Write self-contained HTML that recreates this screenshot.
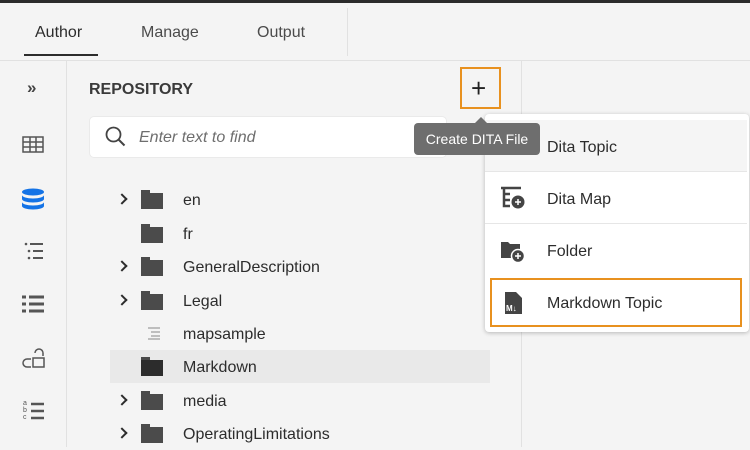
<!DOCTYPE html>
<html><head><style>
*{margin:0;padding:0;box-sizing:border-box}
body{width:750px;height:447px;overflow:hidden;background:#f4f4f4;font-family:"Liberation Sans",sans-serif;color:#2c2c2c;position:relative}
.a{position:absolute}
.tab{position:absolute;top:24px;font-size:16px;color:#4b4b4b}
.row{position:absolute;left:110px;width:380px;height:33px}
.row .t{position:absolute;left:73px;top:9px;font-size:16px;color:#2c2c2c}
.row .f{position:absolute;left:31px;top:10px;width:22px;height:16px;background:#4b4b4b}
.row .f:before{content:"";position:absolute;left:0;top:-3px;width:9px;height:3px;background:#4b4b4b}
.row .c{position:absolute;left:8px;top:12px;width:8px;height:8px;border-right:2px solid #2c2c2c;border-bottom:2px solid #2c2c2c;transform:rotate(-45deg)}
.mi{position:absolute;left:0;width:262px;height:52px;border-bottom:1px solid #e6e6e6}
.mi .t{position:absolute;left:62px;top:19px;font-size:16px;color:#2c2c2c}
</style></head><body>
<div class="a" style="left:0;top:0;width:750px;height:3px;background:#2b2b2b"></div>
<div class="a" style="left:0;top:60px;width:750px;height:1px;background:#e1e1e1"></div>
<div class="tab" style="left:35px;color:#2c2c2c">Author</div>
<div class="tab" style="left:141px">Manage</div>
<div class="tab" style="left:257px">Output</div>
<div class="a" style="left:24px;top:54px;width:74px;height:2px;background:#2c2c2c"></div>
<div class="a" style="left:347px;top:8px;width:1px;height:48px;background:#e1e1e1"></div>
<div class="a" style="left:66px;top:61px;width:1px;height:386px;background:#e1e1e1"></div>
<div class="a" style="left:521px;top:61px;width:1px;height:386px;background:#e1e1e1"></div>
<div class="a" style="left:27px;top:78px;font-size:17px;font-weight:bold;color:#444">»</div>
<svg class="a" style="left:22px;top:136px" width="22" height="17"><rect x="1" y="1" width="20" height="15" fill="none" stroke="#555" stroke-width="1.5"/><path d="M8 1v15M14 1v15M1 6h20M1 11h20" stroke="#555" stroke-width="1.5"/></svg>
<svg class="a" style="left:21px;top:188px" width="24" height="22"><ellipse cx="12" cy="4" rx="11" ry="3.5" fill="#1473e6"/><path d="M1 7c0 2 5 3.5 11 3.5S23 9 23 7v4c0 2-5 3.5-11 3.5S1 13 1 11z M1 14c0 2 5 3.5 11 3.5S23 16 23 14v4c0 2-5 3.5-11 3.5S1 20 1 18z" fill="#1473e6"/></svg>
<svg class="a" style="left:24px;top:242px" width="20" height="18"><path d="M6 2h13M9 9h10M9 16h10" stroke="#555" stroke-width="2"/><circle cx="2" cy="2" r="1.3" fill="#555"/><circle cx="5" cy="9" r="1.3" fill="#555"/><circle cx="5" cy="16" r="1.3" fill="#555"/></svg>
<svg class="a" style="left:22px;top:295px" width="22" height="18"><path d="M0 2h4M0 9h4M0 16h4M7 2h15M7 9h15M7 16h15" stroke="#555" stroke-width="3"/></svg>
<svg class="a" style="left:22px;top:347px" width="24" height="22"><path d="M13 6a4 4 0 0 1 8 0v3M9 12l-4 0a4 4 0 0 0 0 8h4" fill="none" stroke="#555" stroke-width="1.5"/><rect x="11" y="11" width="11" height="9" fill="none" stroke="#555" stroke-width="1.5"/></svg>
<div class="a" style="left:23px;top:400px;font-size:7px;line-height:7px;color:#555">a<br>b<br>c</div>
<svg class="a" style="left:29px;top:402px" width="16" height="20"><path d="M2 2h13M2 9h13M2 16h13" stroke="#555" stroke-width="2.5"/></svg>
<div class="a" style="left:89px;top:81px;font-size:16px;font-weight:bold;color:#3a3a3a">REPOSITORY</div>
<div class="a" style="left:460px;top:67px;width:41px;height:42px;border:2px solid #e8911f"></div>
<div class="a" style="left:471px;top:73px;font-size:26px;color:#222">+</div>
<div class="a" style="left:89px;top:116px;width:358px;height:42px;background:#fff;border-radius:5px;border:1px solid #eaeaea"></div>
<svg class="a" style="left:105px;top:126px" width="22" height="22"><circle cx="8.5" cy="8.5" r="7" fill="none" stroke="#444" stroke-width="1.8"/><path d="M13.5 13.5l6 6" stroke="#444" stroke-width="2"/></svg>
<div class="a" style="left:139px;top:129px;font-size:16px;font-style:italic;color:#6e6e6e">Enter text to find</div>
<div class="row" style="top:183px"><div class="c"></div><div class="f"></div><div class="t">en</div></div>
<div class="row" style="top:217px"><div class="f"></div><div class="t">fr</div></div>
<div class="row" style="top:250px"><div class="c"></div><div class="f"></div><div class="t">GeneralDescription</div></div>
<div class="row" style="top:284px"><div class="c"></div><div class="f"></div><div class="t">Legal</div></div>
<div class="row" style="top:317px"><svg class="a" style="left:33px;top:10px" width="18" height="13"><path d="M5 1h12M8 5h9M8 9h9M5 12h12" stroke="#888" stroke-width="1"/></svg><div class="t">mapsample</div></div>
<div class="row" style="top:350px;background:#e9e9e9"><div class="f" style="background:#2c2c2c"></div><div class="t">Markdown</div></div>
<div class="row" style="top:384px"><div class="c"></div><div class="f"></div><div class="t">media</div></div>
<div class="row" style="top:417px"><div class="c"></div><div class="f"></div><div class="t">OperatingLimitations</div></div>
<div class="a" style="left:485px;top:114px;width:264px;height:218px;background:#fff;border-radius:4px;box-shadow:0 1px 4px rgba(0,0,0,.25)">
<div class="mi" style="top:6px;background:#f5f5f5"><div class="t">Dita Topic</div></div>
<div class="mi" style="top:58px"><svg class="a" style="left:15px;top:14px" width="26" height="24"><path d="M1 2h20M4 2v18h6M4 8h6M4 14h6" stroke="#444" stroke-width="2.5" fill="none"/><circle cx="18" cy="16" r="6.5" fill="#444"/><path d="M18 13v6M15 16h6" stroke="#fff" stroke-width="1.5"/></svg><div class="t">Dita Map</div></div>
<div class="mi" style="top:110px;border:none"><svg class="a" style="left:15px;top:15px" width="26" height="24"><path d="M1 3h7l2 2h10v8H1z" fill="#444"/><path d="M1 6h12v13H1z" fill="#444"/><circle cx="18" cy="17" r="6.5" fill="#444" stroke="#fff" stroke-width="1.5"/><path d="M18 14v6M15 17h6" stroke="#fff" stroke-width="1.5"/></svg><div class="t">Folder</div></div>
<div class="a" style="left:5px;top:164px;width:252px;height:49px;border:2px solid #e8911f"><svg class="a" style="left:12px;top:11px" width="20" height="24"><path d="M1 1h11l6 6v16H1z" fill="#444"/><text x="2" y="20" font-size="8" font-weight="bold" fill="#fff" font-family="Liberation Sans">M↓</text></svg><div class="t" style="position:absolute;left:55px;top:15px;font-size:16px;color:#2c2c2c">Markdown Topic</div></div>
</div>
<div class="a" style="left:414px;top:123px;width:126px;height:32px;background:#6e6e6e;border-radius:4px;color:#fff;font-size:14px;line-height:32px;text-align:center">Create DITA File</div>
<div class="a" style="left:475px;top:117px;width:0;height:0;border-left:6px solid transparent;border-right:6px solid transparent;border-bottom:6px solid #6e6e6e"></div>
</body></html>
